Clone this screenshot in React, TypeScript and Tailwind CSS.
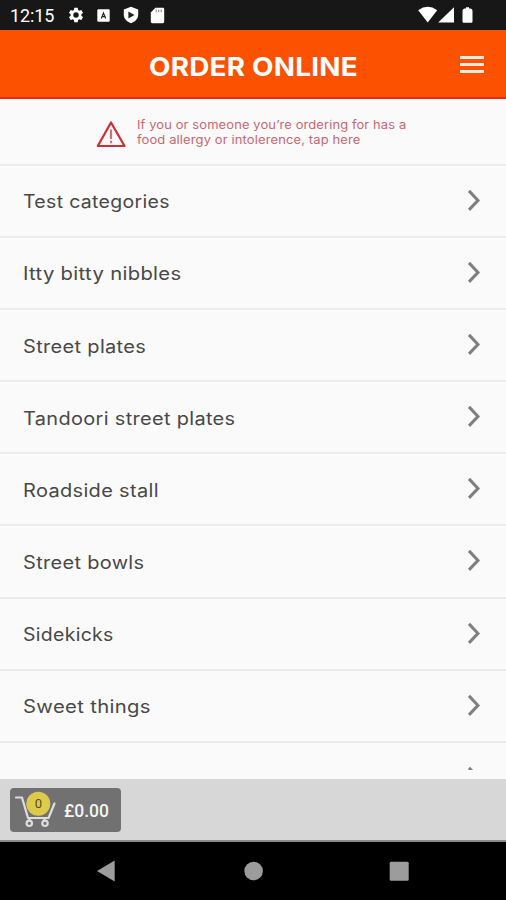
const categories = [
  { name: 'Test categories', stretch: 'scale-x-[1.082]' },
  { name: 'Itty bitty nibbles', stretch: 'scale-x-[1.124]' },
  { name: 'Street plates', stretch: 'scale-x-[1.11]' },
  { name: 'Tandoori street plates', stretch: 'scale-x-[1.108]' },
  { name: 'Roadside stall', stretch: 'scale-x-[1.11]' },
  { name: 'Street bowls', stretch: 'scale-x-[1.108]' },
  { name: 'Sidekicks', stretch: 'scale-x-[1.079]' },
  { name: 'Sweet things', stretch: 'scale-x-[1.126]' },
  { name: '', stretch: 'scale-x-100' },
];

function StatusBar() {
  return (
    <div className="flex h-[30px] shrink-0 items-center bg-[#171717] pl-[10px] pr-8 text-white">
      <span className="w-[57px] whitespace-nowrap font-['Roboto',sans-serif] text-[18px] leading-[30px] tracking-[-0.1px] pt-[2px]">12:15</span>
      <svg className="h-[18px] w-[18px]" viewBox="0 0 24 24" fill="currentColor">
        <path d="M19.14 12.94c.04-.3.06-.61.06-.94 0-.32-.02-.64-.07-.94l2.03-1.58a.49.49 0 0 0 .12-.61l-1.92-3.32a.49.49 0 0 0-.59-.22l-2.39.96c-.5-.38-1.03-.7-1.62-.94L14.4 2.81a.48.48 0 0 0-.48-.41h-3.84a.47.47 0 0 0-.47.41l-.36 2.54c-.59.24-1.13.57-1.62.94l-2.39-.96a.48.48 0 0 0-.59.22L2.74 8.87a.48.48 0 0 0 .12.61l2.03 1.58c-.05.3-.09.63-.09.94s.02.64.07.94l-2.03 1.58a.49.49 0 0 0-.12.61l1.92 3.32c.12.22.37.29.59.22l2.39-.96c.5.38 1.03.7 1.62.94l.36 2.54c.05.24.24.41.48.41h3.84c.24 0 .44-.17.47-.41l.36-2.54c.59-.24 1.13-.56 1.62-.94l2.39.96c.22.08.47 0 .59-.22l1.92-3.32a.48.48 0 0 0-.12-.61zM12 15.6a3.6 3.6 0 1 1 0-7.2 3.6 3.6 0 0 1 0 7.2z" />
      </svg>
      <svg className="ml-[12px] h-[13px] w-[13px]" viewBox="0 0 13 13">
        <rect x="0.3" y="0.3" width="12.4" height="12.4" rx="1.2" fill="white" />
        <path d="M4.300 9.500 6.500 4 8.700 9.500M5.200 7.700h2.600" fill="none" stroke="#222" strokeWidth="1.2" />
      </svg>
      <svg className="ml-[13px] h-[18px] w-[16px]" viewBox="0 0 16 18">
        <path d="M8 .8 15.2 3.4V8.5c0 4.100-3 7.300-7.200 8.700C3.800 15.800.8 12.600.8 8.500V3.400z" fill="white" />
        <path d="M5.400 5.500 11.500 9l-6.100 3.500z" fill="#222" />
      </svg>
      <svg className="ml-[11px] h-[17px] w-[15px]" viewBox="0 0 15 17">
        <path d="M5.400.8h7.400c.8 0 1.400.6 1.400 1.400v12.600c0 .8-.6 1.400-1.400 1.400H2.200c-.8 0-1.400-.6-1.400-1.400V5.400z" fill="white" />
        <path d="M6.200 2.600v2.600M8.700 2.600v2.600M11.200 2.600v2.600" stroke="#777" strokeWidth="1" />
      </svg>
      <svg className="ml-auto h-[18px] w-[56px]" viewBox="0 0 56 18" fill="white">
        <path d="M.2 4.200Q9.700-2.600 19.200 4.200L9.700 16.500z" />
        <path d="M36 1.300v15.200H20.200z" />
        <path d="M46.500 2.500h1.500V1.200h3V2.500h1.500q2 .5 2 2.200v10.800q0 1.200-1.200 1.200h-7.600q-1.200 0-1.200-1.200V4.700q0-1.700 2-2.200z" />
      </svg>
    </div>
  );
}

function Chevron() {
  return (
    <svg className="mt-[22px] h-[24px] w-[16px]" viewBox="0 0 16 24" fill="none" stroke="#808080" strokeWidth="3">
      <path d="M2 2.900 11 12.400 2 21.900" strokeLinejoin="miter" />
    </svg>
  );
}

export default function App() {
  return (
    <div className="flex h-[900px] w-[506px] flex-col overflow-hidden bg-[#fafafa] font-['Inter',sans-serif]">
      <StatusBar />
      <header className="flex h-[69px] shrink-0 items-center border-b-2 border-[#ed2412] bg-[#fc5200] pl-[149px] pr-[22px] pt-1">
        <h1 className="origin-left scale-x-[1.072] whitespace-nowrap pt-[2px] text-[26px] font-bold leading-8 tracking-[0.2px] text-white">ORDER ONLINE</h1>
        <button className="ml-auto flex w-6 flex-col gap-[4px] pb-[3px]" aria-label="Menu">
          <span className="h-[3px] bg-[#ffe9df]" />
          <span className="h-[3px] bg-[#ffe9df]" />
          <span className="h-[3px] bg-[#ffe9df]" />
        </button>
      </header>

      <div className="flex h-[65px] shrink-0 items-start pl-[96px]">
        <svg className="mt-[21px] h-[28px] w-[30px] shrink-0" viewBox="0 0 30 28" fill="none" stroke="#ce2d31">
          <path d="M15 2.500 28.500 26H1.800z" strokeWidth="2.200" strokeLinejoin="round" />
          <path d="M15 9.500v9.500M15 20.800v2.400" strokeWidth="2.200" stroke="#d76b6f" />
        </svg>
        <p className="ml-[11px] mt-[18.500px] whitespace-nowrap text-[11.500px] leading-[15.500px] text-[#cc6670]">
          <span className="block w-max origin-left scale-x-[1.125] tracking-[0.1px]">If you or someone you’re ordering for has a</span>
          <span className="block w-max origin-left scale-x-[1.13] tracking-[0.1px]">food allergy or intolerence, tap here</span>
        </p>
      </div>

      <main className="h-[606px] shrink-0 overflow-hidden">
        {categories.map((c, i) => (
          <div key={i} className="flex h-[72.100px] items-start border-t-2 border-[#ebebeb] pl-[23px] pr-[23px]">
            <span className={`mt-[23.400px] origin-left whitespace-nowrap text-[18px] leading-[26px] tracking-[0.3px] text-[#484848] ${c.stretch}`}>{c.name}</span>
            <span className="ml-auto"><Chevron /></span>
          </div>
        ))}
      </main>

      <div className="mt-auto h-[63px] shrink-0 border-b-2 border-[#8b8b8b] bg-[#d7d7d7] pl-[10px] pt-[9px]">
        <button className="flex h-[44px] w-[111px] items-center rounded-[4px] bg-[#717171] pl-[4px]">
          <svg className="h-[38px] w-[44px]" viewBox="0 0 44 38" fill="none" stroke="#dedede" strokeWidth="2.200">
            <path d="M2 6.500h6l6 20.500h20.500L40.500 12.500" strokeLinecap="round" strokeLinejoin="round" />
            <path d="M15.500 27v3M30.500 27v3" />
            <circle cx="15.300" cy="32.300" r="2.700" />
            <circle cx="31" cy="32.300" r="2.700" />
            <circle cx="24.300" cy="12.700" r="12" fill="#dccb4b" stroke="none" />
            <text x="24.300" y="17.300" textAnchor="middle" fill="#55501f" stroke="none" fontSize="13" className="font-['Roboto',sans-serif]">0</text>
          </svg>
          <span className="ml-[6px] pt-[2px] whitespace-nowrap font-['Roboto',sans-serif] text-[17.500px] font-medium text-[#f4f4f4]">£0.00</span>
        </button>
      </div>

      <nav className="h-[58px] shrink-0 bg-black">
        <svg className="block h-[58px] w-[506px]" viewBox="0 842 506 58" fill="#9c9c9c">
          <path d="M97 871 114.700 860.500v21z" />
          <circle cx="253.600" cy="871" r="9.300" />
          <rect x="389.700" y="861.700" width="19" height="19" rx="1.500" />
        </svg>
      </nav>
    </div>
  );
}
